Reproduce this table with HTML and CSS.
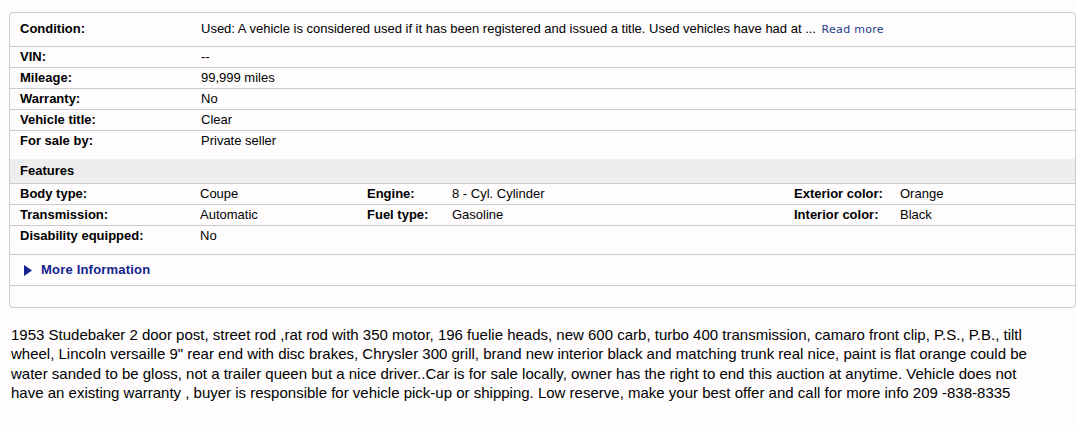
FILE: index.html
```html
<!DOCTYPE html>
<html>
<head>
<meta charset="utf-8">
<link rel="stylesheet" href="styles.css">
</head>
<body>
<div class="specs">
  <div class="row row-cond"><span class="lbl">Condition:</span><span class="val">Used: A vehicle is considered used if it has been registered and issued a title. Used vehicles have had at ... <a class="read-more" href="#">Read more</a></span></div>
  <div class="row"><span class="lbl">VIN:</span><span class="val">--</span></div>
  <div class="row"><span class="lbl">Mileage:</span><span class="val">99,999 miles</span></div>
  <div class="row"><span class="lbl">Warranty:</span><span class="val">No</span></div>
  <div class="row"><span class="lbl">Vehicle title:</span><span class="val">Clear</span></div>
  <div class="row row-end"><span class="lbl">For sale by:</span><span class="val">Private seller</span></div>
  <div class="band">Features</div>
  <div class="feat">
    <span class="lbl">Body type:</span><span class="val">Coupe</span>
    <span class="lbl">Engine:</span><span class="val">8 - Cyl. Cylinder</span>
    <span class="lbl">Exterior color:</span><span class="val">Orange</span>
  </div>
  <div class="feat">
    <span class="lbl">Transmission:</span><span class="val">Automatic</span>
    <span class="lbl">Fuel type:</span><span class="val">Gasoline</span>
    <span class="lbl">Interior color:</span><span class="val">Black</span>
  </div>
  <div class="feat feat-end">
    <span class="lbl">Disability equipped:</span><span class="val">No</span>
    <span></span><span></span><span></span><span></span>
  </div>
  <div class="more-row">
    <svg class="tri" width="8" height="11" viewBox="0 0 8 11"><path d="M0 0 L8 5.5 L0 11 Z" fill="#13238b"/></svg>
    <a class="more-info" href="#">More Information</a>
  </div>
  <div class="foot"></div>
</div>
<p class="desc">1953 Studebaker 2 door post, street rod ,rat rod with 350 motor, 196 fuelie heads, new 600 carb, turbo 400 transmission, camaro front clip, P.S., P.B., tiltl wheel, Lincoln versaille 9" rear end with disc brakes, Chrysler 300 grill, brand new interior black and matching trunk real nice, paint is flat orange could be water sanded to be gloss, not a trailer queen but a nice driver..Car is for sale locally, owner has the right to end this auction at anytime. Vehicle does not have an existing warranty , buyer is responsible for vehicle pick-up or shipping. Low reserve, make your best offer and call for more info 209 -838-8335</p>
</body>
</html>
```
FILE: styles.css
```css
html, body {
  margin: 0;
  padding: 0;
  background: #fefcfd;
}
body {
  font-family: "Liberation Sans", Arial, sans-serif;
  color: #000;
  overflow: hidden;
}
.specs {
  margin: 12px 0 0 9px;
  width: 1065px;
  border: 1px solid #cccccc;
  border-radius: 4px;
  font-size: 13px;
  line-height: 20px;
}
.row {
  display: grid;
  grid-template-columns: 181px 1fr;
  padding-left: 10px;
  border-bottom: 1px solid #cccccc;
  height: 20px;
}
.row-cond {
  height: 20px;
  padding-top: 6px;
  padding-bottom: 7px;
}
.row-end {
  border-bottom: none;
  padding-bottom: 8px;
}
.lbl {
  font-weight: bold;
  white-space: nowrap;
}
.val {
  white-space: nowrap;
}
.read-more {
  font-family: "DejaVu Sans", Verdana, sans-serif;
  font-size: 11px;
  letter-spacing: 0.3px;
  color: #233e84;
  text-decoration: none;
  margin-left: 2px;
}
.band {
  background: #eeeeee;
  height: 24px;
  line-height: 24px;
  padding-left: 10px;
  font-weight: bold;
  border-bottom: 1px solid #cccccc;
}
.feat {
  display: grid;
  grid-template-columns: 180px 167px 85px 342px 106px 1fr;
  padding-left: 10px;
  height: 20px;
  border-bottom: 1px solid #cccccc;
}
.feat-end {
  padding-bottom: 8px;
}
.more-row {
  display: flex;
  align-items: center;
  height: 30px;
  padding-left: 14px;
  border-bottom: 1px solid #cccccc;
}
.tri {
  display: block;
  margin-right: 9px;
}
.more-info {
  font-weight: bold;
  font-size: 13px;
  letter-spacing: 0.2px;
  color: #13238b;
  text-decoration: none;
}
.foot {
  height: 21px;
}
.desc {
  margin: 17px 0 0 11px;
  width: 1040px;
  font-size: 15px;
  line-height: 19.33px;
}
```
